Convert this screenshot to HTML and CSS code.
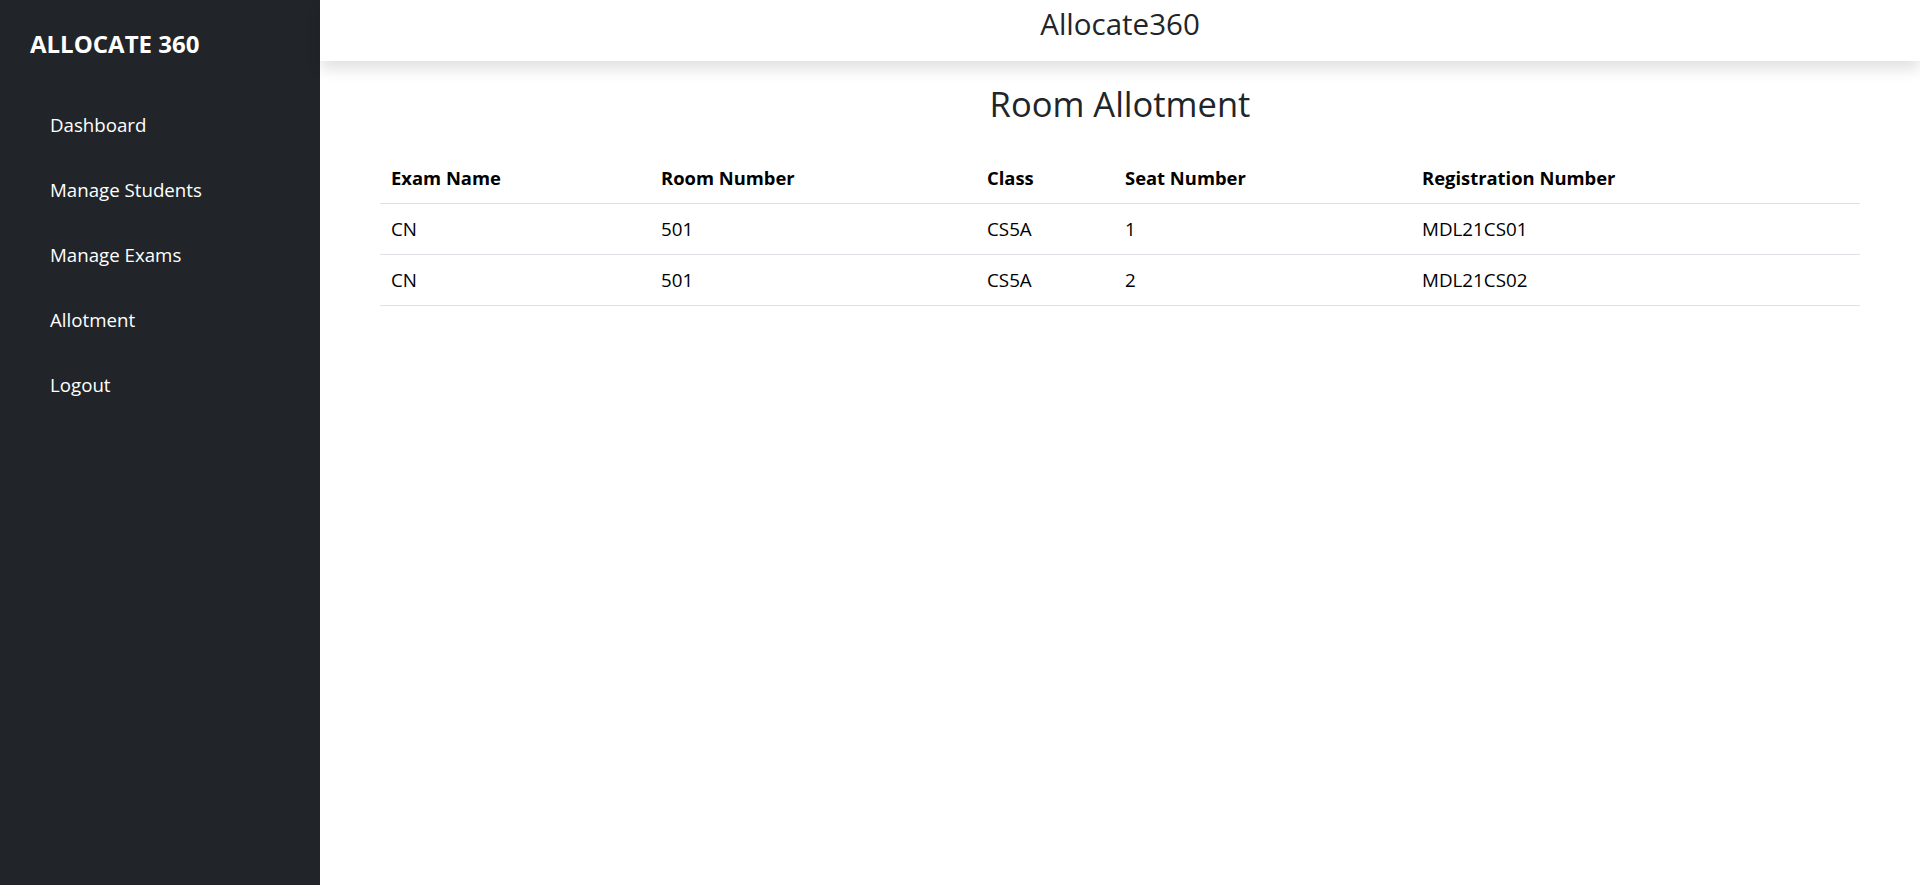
FILE: index.html
```html
<!DOCTYPE html>
<html lang="en">
<head>
<meta charset="utf-8">
<title>Allocate360</title>
<link rel="stylesheet" href="styles.css">
</head>
<body>
<div class="layout">
  <aside class="sidebar">
    <div class="brand">ALLOCATE 360</div>
    <nav class="nav">
      <a class="nav-link" href="#">Dashboard</a>
      <a class="nav-link" href="#">Manage Students</a>
      <a class="nav-link" href="#">Manage Exams</a>
      <a class="nav-link" href="#">Allotment</a>
      <a class="nav-link" href="#">Logout</a>
    </nav>
  </aside>
  <main class="main">
    <header class="topbar">Allocate360</header>
    <section class="content">
      <h2 class="title">Room Allotment</h2>
      <table class="table">
        <colgroup>
          <col class="c1"><col class="c2"><col class="c3"><col class="c4"><col class="c5">
        </colgroup>
        <thead>
          <tr><th>Exam Name</th><th>Room Number</th><th>Class</th><th>Seat Number</th><th>Registration Number</th></tr>
        </thead>
        <tbody>
          <tr><td>CN</td><td>501</td><td>CS5A</td><td>1</td><td>MDL21CS01</td></tr>
          <tr><td>CN</td><td>501</td><td>CS5A</td><td>2</td><td>MDL21CS02</td></tr>
        </tbody>
      </table>
    </section>
  </main>
</div>
</body>
</html>
```
FILE: styles.css
```css
html, body {
  margin: 0;
  padding: 0;
  height: 100%;
}
body {
  font-family: "Open Sans", "Noto Sans", sans-serif;
  color: #212529;
  background: #fff;
}
.layout {
  display: flex;
  min-height: 100vh;
}
.sidebar {
  width: 320px;
  flex: 0 0 320px;
  background: #212529;
  color: #fff;
  box-sizing: border-box;
  padding: 29px 0 0 30px;
}
.brand {
  font-size: 24px;
  font-weight: 700;
  line-height: 30px;
}
.nav {
  display: flex;
  flex-direction: column;
  gap: 35px;
  padding: 51px 0 0 20px;
}
.nav-link {
  color: #fff;
  text-decoration: none;
  font-size: 18.7px;
  line-height: 30px;
}
.main {
  flex: 1;
  display: flex;
  flex-direction: column;
}
.topbar {
  height: 61px;
  box-sizing: border-box;
  display: flex;
  justify-content: center;
  padding-top: 4px;
  font-size: 29.5px;
  line-height: 40px;
  color: #212529;
  box-shadow: 0 8px 14px rgba(0, 0, 0, 0.12);
  position: relative;
  z-index: 1;
}
.content {
  padding: 0 60px;
}
.title {
  margin: 18px 0 0;
  text-align: center;
  font-size: 34.5px;
  font-weight: 400;
  line-height: 50px;
  color: #212529;
}
.table {
  width: 100%;
  border-collapse: collapse;
  margin-top: 24px;
  font-size: 18.8px;
  color: #000;
}
.table th, .table td {
  text-align: left;
  padding: 12px 11px;
  line-height: 26px;
  border-bottom: 1px solid #dee2e6;
}
.table th {
  font-weight: 700;
  font-size: 18.4px;
}
.c1 { width: 270px; }
.c2 { width: 326px; }
.c3 { width: 138px; }
.c4 { width: 297px; }
.c5 { width: auto; }
```
